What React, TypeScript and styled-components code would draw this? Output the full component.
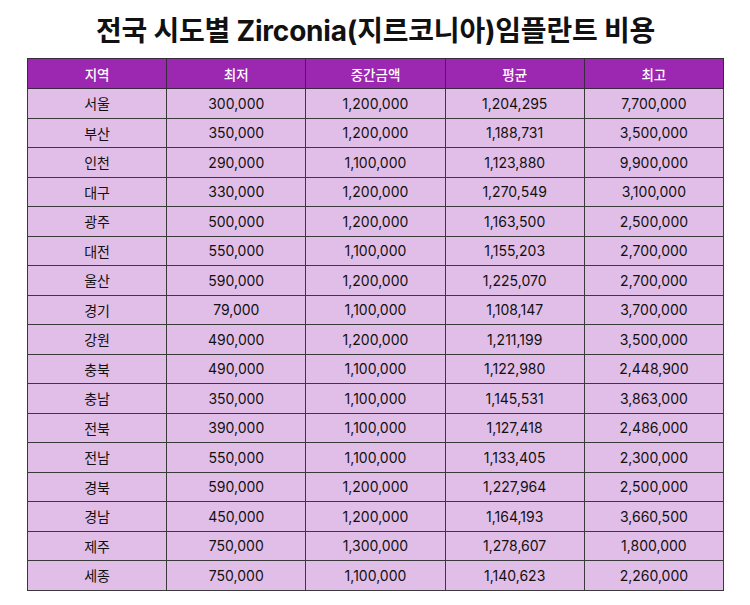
import { FC } from 'react';
import styled, { createGlobalStyle } from 'styled-components';

const GlobalStyle = createGlobalStyle`
  body {
    margin: 0;
    background: #ffffff;
    font-family: Inter, "Noto Sans CJK KR", sans-serif;
  }
`;

const Page = styled.div`
  width: 750px;
  padding: 0 26px 0 27px;
  box-sizing: border-box;
`;

const Title = styled.h1`
  margin: 0;
  height: 58px;
  display: flex;
  align-items: center;
  justify-content: center;
  font-size: 28px;
  font-weight: 700;
  color: #111111;
  letter-spacing: -0.2px;
  font-family: Inter, "Noto Sans CJK KR", sans-serif;
`;

const Table = styled.table`
  width: 697px;
  border-collapse: collapse;
  table-layout: fixed;
  border: 1px solid #555555;
`;

const HeadCell = styled.th`
  height: 29px;
  padding: 0;
  background: #9c27b0;
  color: #ffffff;
  font-size: 13.5px;
  font-weight: 500;
  border: 1px solid #3a2a3e;
  text-align: center;
`;

const Cell = styled.td`
  height: 28.5px;
  padding: 0;
  background: #e1bee7;
  color: #111111;
  font-size: 14px;
  border: 1px solid #3a3a3a;
  text-align: center;
`;

interface IRow {
  region: string;
  min: string;
  median: string;
  avg: string;
  max: string;
}

const rows: IRow[] = [
  { region: '서울', min: '300,000', median: '1,200,000', avg: '1,204,295', max: '7,700,000' },
  { region: '부산', min: '350,000', median: '1,200,000', avg: '1,188,731', max: '3,500,000' },
  { region: '인천', min: '290,000', median: '1,100,000', avg: '1,123,880', max: '9,900,000' },
  { region: '대구', min: '330,000', median: '1,200,000', avg: '1,270,549', max: '3,100,000' },
  { region: '광주', min: '500,000', median: '1,200,000', avg: '1,163,500', max: '2,500,000' },
  { region: '대전', min: '550,000', median: '1,100,000', avg: '1,155,203', max: '2,700,000' },
  { region: '울산', min: '590,000', median: '1,200,000', avg: '1,225,070', max: '2,700,000' },
  { region: '경기', min: '79,000', median: '1,100,000', avg: '1,108,147', max: '3,700,000' },
  { region: '강원', min: '490,000', median: '1,200,000', avg: '1,211,199', max: '3,500,000' },
  { region: '충북', min: '490,000', median: '1,100,000', avg: '1,122,980', max: '2,448,900' },
  { region: '충남', min: '350,000', median: '1,100,000', avg: '1,145,531', max: '3,863,000' },
  { region: '전북', min: '390,000', median: '1,100,000', avg: '1,127,418', max: '2,486,000' },
  { region: '전남', min: '550,000', median: '1,100,000', avg: '1,133,405', max: '2,300,000' },
  { region: '경북', min: '590,000', median: '1,200,000', avg: '1,227,964', max: '2,500,000' },
  { region: '경남', min: '450,000', median: '1,200,000', avg: '1,164,193', max: '3,660,500' },
  { region: '제주', min: '750,000', median: '1,300,000', avg: '1,278,607', max: '1,800,000' },
  { region: '세종', min: '750,000', median: '1,100,000', avg: '1,140,623', max: '2,260,000' }
];

const headers = ['지역', '최저', '중간금액', '평균', '최고'];

const App: FC = () => (
  <Page>
    <GlobalStyle />
    <Title>전국 시도별 Zirconia(지르코니아)임플란트 비용</Title>
    <Table>
      <thead>
        <tr>
          {headers.map(h => (
            <HeadCell key={h}>{h}</HeadCell>
          ))}
        </tr>
      </thead>
      <tbody>
        {rows.map(r => (
          <tr key={r.region}>
            <Cell>{r.region}</Cell>
            <Cell>{r.min}</Cell>
            <Cell>{r.median}</Cell>
            <Cell>{r.avg}</Cell>
            <Cell>{r.max}</Cell>
          </tr>
        ))}
      </tbody>
    </Table>
  </Page>
);

export default App;
